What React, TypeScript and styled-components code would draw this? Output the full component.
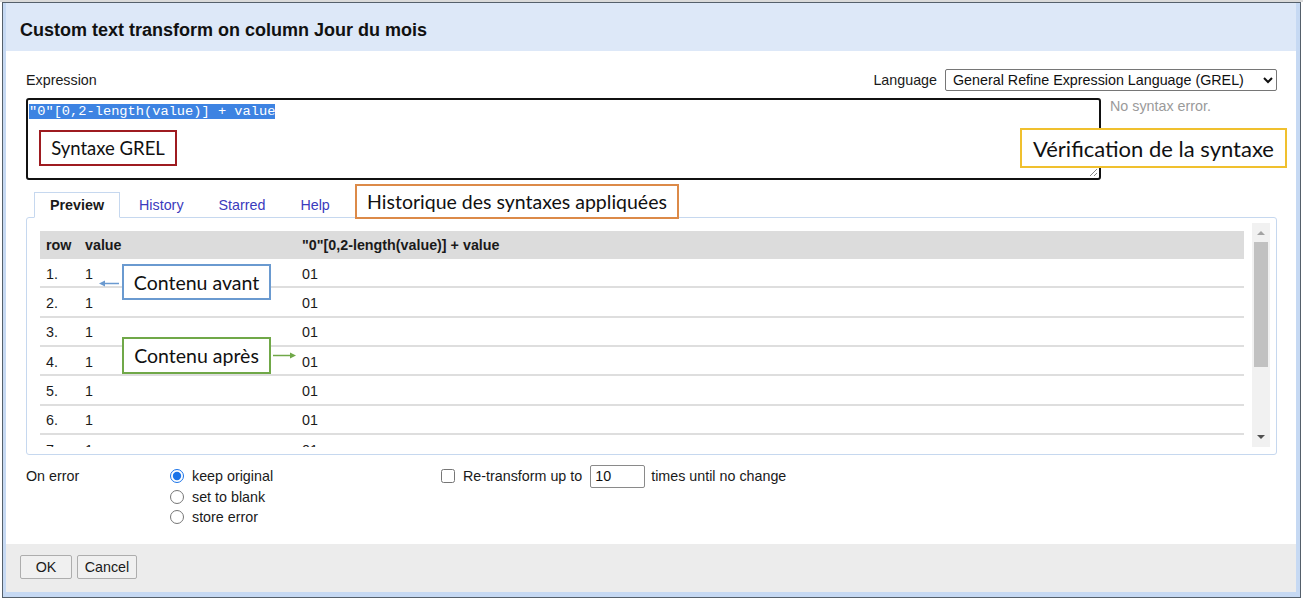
import React from "react";
import styled, { createGlobalStyle } from "styled-components";

const GlobalStyle = createGlobalStyle`
  html, body { margin: 0; padding: 0; background: #ffffff; }
  body { font-family: "Liberation Sans", Arial, sans-serif; color: #1a1a1a; }
  * { box-sizing: border-box; }
`;

const Page = styled.div`
  position: relative;
  width: 1303px;
  height: 602px;
  padding: 2px 0 0 2px;
  background: linear-gradient(#dadada 0 2px, #ffffff 2px);
  overflow: hidden;
`;

const Dialog = styled.div`
  width: 1299px;
  height: 596px;
  border: 1px solid #55606b;
  background: #c6d9f3;
  padding: 0 4px 5px 3px;
  display: flex;
  flex-direction: column;
`;

const Header = styled.div`
  height: 48px;
  flex-shrink: 0;
  background: #dde8f8;
  padding: 6px 0 0 14px;
  display: flex;
  align-items: center;
  font-weight: bold;
  font-size: 18px;
  color: #111;
`;

const Body = styled.div`
  flex: 1;
  background: #ffffff;
  padding: 18px 19px 0 20px;
  font-size: 14.3px;
`;

const TopRow = styled.div`
  display: flex;
  justify-content: space-between;
  align-items: center;
  height: 22px;
`;

const LangGroup = styled.div`
  display: flex;
  align-items: center;
  gap: 8px;
`;

const LangSelect = styled.select`
  width: 332px;
  height: 22px;
  font-family: "Liberation Sans", Arial, sans-serif;
  font-size: 14.3px;
  color: #111;
  background: #fff;
  border: 1px solid #767676;
  border-radius: 2px;
  padding: 0 0 0 3px;
`;

const EditorRow = styled.div`
  margin-top: 7px;
  display: flex;
  align-items: flex-start;
`;

const Editor = styled.div`
  position: relative;
  width: 1075px;
  height: 82px;
  border: 2px solid #111;
  border-radius: 3px;
  padding: 4px 1px 2px;
  font-family: "Liberation Mono", monospace;
  font-size: 13.7px;
  line-height: 16px;
`;

const Selected = styled.span`
  background: #3d83e2;
  color: #ffffff;
`;

const ResizeGrip = styled.svg`
  position: absolute;
  right: 1px;
  bottom: 1px;
`;

const SyntaxStatus = styled.div`
  margin-left: 9px;
  color: #9a9a9a;
  line-height: 16px;
`;

const TabBar = styled.div`
  margin-top: 12px;
  padding-left: 8px;
  display: flex;
  margin-bottom: -1px;
  position: relative;
  z-index: 1;
`;

const Tab = styled.div<{ $active?: boolean }>`
  height: 26px;
  padding: 0 15px;
  margin-right: 3px;
  display: flex;
  align-items: center;
  border: 1px solid ${(p) => (p.$active ? "#c6d8ef" : "transparent")};
  border-bottom-color: ${(p) => (p.$active ? "#ffffff" : "transparent")};
  background: ${(p) => (p.$active ? "#ffffff" : "transparent")};
  font-weight: ${(p) => (p.$active ? "bold" : "normal")};
  color: ${(p) => (p.$active ? "#1a1a1a" : "#3b3bbd")};
`;

const Panel = styled.div`
  height: 238px;
  border: 1px solid #c6d8ef;
  border-radius: 3px;
  padding: 5px 6px 7px 0;
  display: flex;
`;

const Viewport = styled.div`
  flex: 1;
  overflow: hidden;
  padding: 8px 8px 0 13px;
`;

const Row = styled.div<{ $head?: boolean }>`
  display: grid;
  grid-template-columns: 39px 217px 1fr;
  align-items: center;
  height: ${(p) => (p.$head ? "28px" : "29.33px")};
  background: ${(p) => (p.$head ? "#dcdcdc" : "transparent")};
  border-bottom: ${(p) => (p.$head ? "none" : "2px solid #dedede")};
  font-weight: ${(p) => (p.$head ? "bold" : "normal")};
  padding-top: ${(p) => (p.$head ? "0" : "2px")};
  color: #1a1a1a;
`;

const Cell = styled.div`
  padding-left: 6px;
  white-space: nowrap;
`;

const ScrollTrack = styled.div`
  width: 18px;
  background: #f1f1f1;
  display: flex;
  flex-direction: column;
  align-items: center;
`;

const ArrowUp = styled.div`
  margin-top: 8px;
  width: 0;
  height: 0;
  border-left: 4px solid transparent;
  border-right: 4px solid transparent;
  border-bottom: 4px solid #a3a3a3;
`;

const Thumb = styled.div`
  margin-top: 7px;
  width: 14px;
  height: 125px;
  background: #c1c1c1;
`;

const ArrowDown = styled.div`
  margin-top: auto;
  margin-bottom: 8px;
  width: 0;
  height: 0;
  border-left: 4px solid transparent;
  border-right: 4px solid transparent;
  border-top: 4px solid #505050;
`;

const Options = styled.div`
  margin-top: 11px;
  display: grid;
  grid-template-columns: 144px 271px auto;
  align-items: start;
`;

const OptLabel = styled.div`
  line-height: 20px;
`;

const RadioList = styled.div`
  display: flex;
  flex-direction: column;
`;

const RadioRow = styled.label`
  display: flex;
  align-items: center;
  height: 20.5px;
  gap: 8px;
`;

const Radio = styled.input`
  width: 14px;
  height: 14px;
  margin: 0;
  accent-color: #1a73e8;
`;

const RetransformRow = styled.label`
  display: flex;
  align-items: center;
  height: 20px;
`;

const Check = styled.input`
  width: 14px;
  height: 14px;
  margin: 0 8px 0 0;
`;

const TimesInput = styled.input`
  width: 55px;
  height: 23px;
  margin: 0 6px 0 8px;
  font-family: "Liberation Sans", Arial, sans-serif;
  font-size: 14.3px;
  color: #111;
  border: 1px solid #8a8a8a;
  border-radius: 2px;
  padding: 0 4px;
`;

const Footer = styled.div`
  height: 48px;
  flex-shrink: 0;
  background: #ececec;
  padding: 11px 0 0 14px;
  display: flex;
  gap: 5px;
  align-items: flex-start;
`;

const Button = styled.button<{ $w: number }>`
  width: ${(p) => p.$w}px;
  height: 24px;
  font-family: "Liberation Sans", Arial, sans-serif;
  font-size: 14.3px;
  color: #1a1a1a;
  background: #f0f0f0;
  border: 1px solid #adadad;
  border-radius: 2px;
  padding: 0;
`;

const Note = styled.div<{ $x: number; $y: number; $w: number; $h: number; $c: string; $fs: number }>`
  position: absolute;
  left: ${(p) => p.$x}px;
  top: ${(p) => p.$y}px;
  width: ${(p) => p.$w}px;
  height: ${(p) => p.$h}px;
  border: 2px solid ${(p) => p.$c};
  background: #ffffff;
  display: flex;
  align-items: center;
  justify-content: center;
  font-family: Lato, "Open Sans", sans-serif;
  font-size: ${(p) => p.$fs}px;
  color: #111;
  white-space: nowrap;
  z-index: 5;
`;

const Arrow = styled.svg<{ $x: number; $y: number }>`
  position: absolute;
  left: ${(p) => p.$x}px;
  top: ${(p) => p.$y}px;
  z-index: 5;
`;

const rows = [1, 2, 3, 4, 5, 6, 7];

export default function App() {
  return (
    <Page>
      <GlobalStyle />
      <Dialog>
        <Header>Custom text transform on column Jour du mois</Header>
        <Body>
          <TopRow>
            <span>Expression</span>
            <LangGroup>
              <span>Language</span>
              <LangSelect defaultValue="grel">
                <option value="grel">General Refine Expression Language (GREL)</option>
              </LangSelect>
            </LangGroup>
          </TopRow>
          <EditorRow>
            <Editor>
              <Selected>"0"[0,2-length(value)] + value</Selected>
              <ResizeGrip width="9" height="9" viewBox="0 0 9 9">
                <path d="M8 1 L1 8 M8 5 L5 8" stroke="#888" strokeWidth="1" />
              </ResizeGrip>
            </Editor>
            <SyntaxStatus>No syntax error.</SyntaxStatus>
          </EditorRow>
          <TabBar>
            <Tab $active>Preview</Tab>
            <Tab>History</Tab>
            <Tab>Starred</Tab>
            <Tab>Help</Tab>
          </TabBar>
          <Panel>
            <Viewport>
              <Row $head>
                <Cell>row</Cell>
                <Cell>value</Cell>
                <Cell>"0"[0,2-length(value)] + value</Cell>
              </Row>
              {rows.map((r) => (
                <Row key={r}>
                  <Cell>{r}.</Cell>
                  <Cell>1</Cell>
                  <Cell>01</Cell>
                </Row>
              ))}
            </Viewport>
            <ScrollTrack>
              <ArrowUp />
              <Thumb />
              <ArrowDown />
            </ScrollTrack>
          </Panel>
          <Options>
            <OptLabel>On error</OptLabel>
            <RadioList>
              <RadioRow>
                <Radio type="radio" name="onerror" defaultChecked />
                keep original
              </RadioRow>
              <RadioRow>
                <Radio type="radio" name="onerror" />
                set to blank
              </RadioRow>
              <RadioRow>
                <Radio type="radio" name="onerror" />
                store error
              </RadioRow>
            </RadioList>
            <RetransformRow>
              <Check type="checkbox" />
              Re-transform up to
              <TimesInput type="text" defaultValue="10" />
              times until no change
            </RetransformRow>
          </Options>
        </Body>
        <Footer>
          <Button $w={52}>OK</Button>
          <Button $w={60}>Cancel</Button>
        </Footer>
      </Dialog>

      <Note $x={39} $y={130} $w={138} $h={36} $c="#9e1b20" $fs={18.5}>Syntaxe GREL</Note>
      <Note $x={1020} $y={128} $w={267} $h={40} $c="#f0c02e" $fs={22}>Vérification de la syntaxe</Note>
      <Note $x={355} $y={184} $w={324} $h={35} $c="#dc8a48" $fs={19.5}>Historique des syntaxes appliquées</Note>
      <Note $x={122} $y={264} $w={149} $h={36} $c="#6a9ad0" $fs={19.5}>Contenu avant</Note>
      <Note $x={122} $y={337} $w={149} $h={37} $c="#70a848" $fs={19.5}>Contenu après</Note>
      <Arrow $x={99} $y={279} width="21" height="9" viewBox="0 0 21 9">
        <path d="M20 4.5 H4" stroke="#6a9ad0" strokeWidth="1.5" />
        <path d="M0 4.5 L6 1.5 L6 7.5 Z" fill="#6a9ad0" />
      </Arrow>
      <Arrow $x={273} $y={351} width="23" height="9" viewBox="0 0 23 9">
        <path d="M0 4.5 H18" stroke="#70a848" strokeWidth="1.5" />
        <path d="M23 4.5 L17 1.5 L17 7.5 Z" fill="#70a848" />
      </Arrow>
    </Page>
  );
}
